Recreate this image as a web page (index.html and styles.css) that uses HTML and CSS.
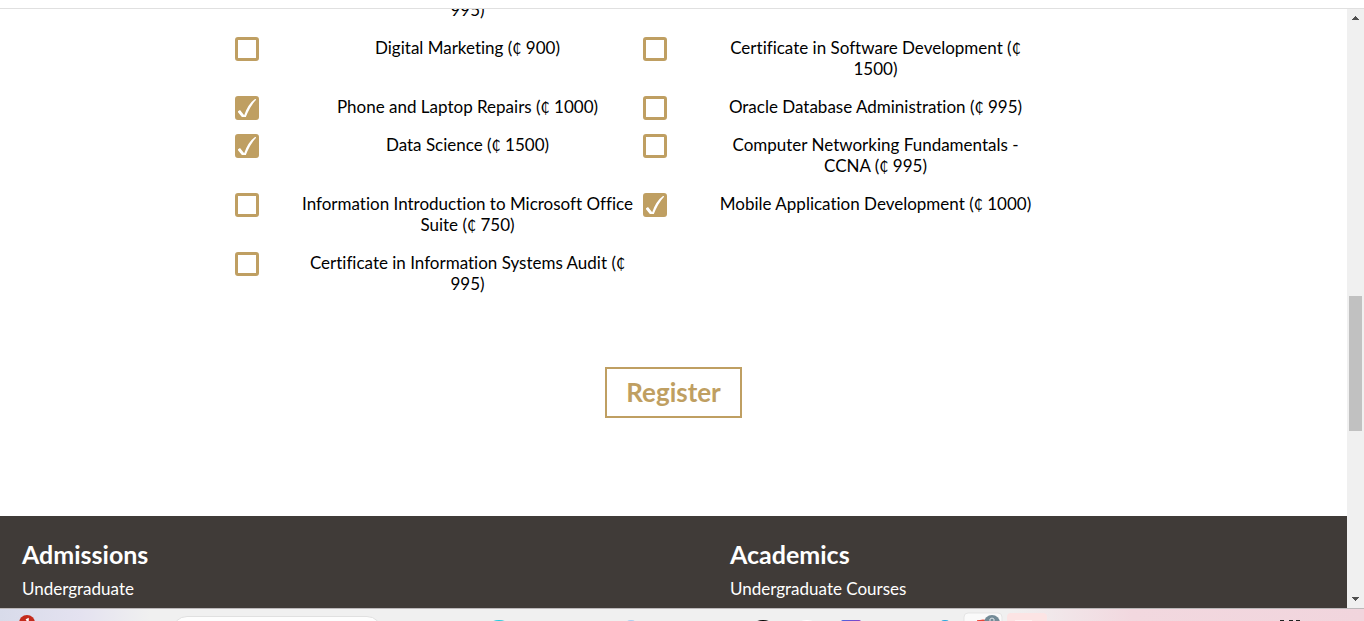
FILE: index.html
```html
<!DOCTYPE html>
<html lang="en">
<head>
<meta charset="utf-8">
<title>Course registration</title>
<link rel="stylesheet" href="styles.css">
</head>
<body>
<div class="top-edge"></div>
<div class="viewport">
  <div class="page">
    <form class="form">
      <div class="courses">
        <p class="carry">995)</p>
        <label class="course"><input class="box" type="checkbox"><span class="name">Digital Marketing (<span class="cedi">₵</span> 900)</span></label>
        <label class="course"><input class="box" type="checkbox"><span class="name">Certificate in Software Development (<span class="cedi">₵</span><br>1500)</span></label>
        <label class="course"><input class="box" type="checkbox" checked><span class="name">Phone and Laptop Repairs (<span class="cedi">₵</span> 1000)</span></label>
        <label class="course"><input class="box" type="checkbox"><span class="name">Oracle Database Administration (<span class="cedi">₵</span> 995)</span></label>
        <label class="course"><input class="box" type="checkbox" checked><span class="name">Data Science (<span class="cedi">₵</span> 1500)</span></label>
        <label class="course"><input class="box" type="checkbox"><span class="name">Computer Networking Fundamentals -<br>CCNA (<span class="cedi">₵</span> 995)</span></label>
        <label class="course"><input class="box" type="checkbox"><span class="name">Information Introduction to Microsoft Office<br>Suite (<span class="cedi">₵</span> 750)</span></label>
        <label class="course"><input class="box" type="checkbox" checked><span class="name">Mobile Application Development (<span class="cedi">₵</span> 1000)</span></label>
        <label class="course"><input class="box" type="checkbox"><span class="name">Certificate in Information Systems Audit (<span class="cedi">₵</span><br>995)</span></label>
      </div>
      <button class="register" type="submit">Register</button>
    </form>
    <footer class="footer">
      <nav><h2 class="heading">Admissions</h2><a class="link" href="#undergraduate">Undergraduate</a></nav>
      <nav><h2 class="heading">Academics</h2><a class="link" href="#courses">Undergraduate Courses</a></nav>
    </footer>
  </div>
  <div class="scrollbar">
    <svg class="arrow" viewBox="0 0 17 17"><path d="M5 11h7v-1h-1v-1h-1v-1h-1v-1h-1v1h-1v1h-1v1h-1z" fill="#505050"/></svg>
    <div class="track"><div class="thumb"></div></div>
    <svg class="arrow" viewBox="0 0 17 17"><path d="M5 6h7v1h-1v1h-1v1h-1v1h-1v-1h-1v-1h-1v-1h-1z" fill="#505050"/></svg>
  </div>
</div>
<div class="taskbar">
  <svg class="badge" width="172" height="12" viewBox="0 0 172 12"><circle cx="27" cy="14" r="8" fill="#c42b1c"/><path d="M26 11l2-1v4" fill="none" stroke="#fff" stroke-width="1.5"/></svg>
  <input class="search" type="text" aria-label="Search">
  <svg class="apps" width="982" height="12" viewBox="382 0 982 12">
    <defs><linearGradient id="v"><stop stop-color="#4967e0"/><stop offset="1" stop-color="#8a3fc5"/></linearGradient></defs>
    <rect x="964" y="4" width="38" height="14" rx="4" fill="#fafafa" stroke="#e5e5e5"/>
    <rect x="1007" y="4" width="40" height="14" rx="4" fill="#fce4e4"/>
    <rect x="1015" y="11" width="17" height="1" fill="#fff2f2"/>
    <ellipse cx="499" cy="14" rx="8" ry="3" fill="#20c9dc"/>
    <ellipse cx="631" cy="13" rx="4" ry="2" fill="#a9cdf1"/>
    <ellipse cx="763" cy="14" rx="8" ry="3" fill="#000"/>
    <ellipse cx="807" cy="13" rx="6" ry="2" fill="#fff"/>
    <rect x="841" y="11" width="20" height="4" rx="2" fill="url(#v)"/>
    <ellipse cx="945" cy="13" rx="4" ry="2" fill="#28a5dc"/>
    <path d="M977 12q6-2 12 0z" fill="#ea4335" stroke="#ea4335"/>
    <circle cx="992" cy="14" r="8" fill="#738b97"/>
    <path d="M990 12v-2q2-2 4 0v2" fill="none" stroke="#dce4e8"/>
    <path d="M1280 11.5h4m5 0h4m3 0h4" stroke="#222"/>
  </svg>
</div>
</body>
</html>
```
FILE: styles.css
```css
* { box-sizing: border-box; }
body {
  margin: 0;
  height: 100vh;
  display: flex;
  flex-direction: column;
  overflow: hidden;
  background: #fff;
  color: #000;
  font-family: Lato, "Liberation Sans", sans-serif;
  font-size: 17px;
  line-height: 21px;
  font-variant-ligatures: none;
}
.top-edge { flex: none; height: 9px; border-bottom: 1px solid #e0e0e0; }
.viewport { flex: 1; min-height: 0; display: flex; }
.page { flex: 1; display: flex; flex-direction: column; overflow: hidden; }
.form { display: flex; flex-direction: column; align-items: center; padding-bottom: 98px; }
.courses {
  width: 878px;
  max-width: 100%;
  margin-top: -10px;
  display: grid;
  grid-template-columns: 402px 402px;
  column-gap: 6px;
}
.carry { grid-column: 1 / -1; margin: 0; padding: 0 0 17px 64px; width: 402px; text-align: center; }
.course { display: flex; align-items: flex-start; gap: 40px; }
.name { flex: 1; padding-bottom: 17px; text-align: center; }
.cedi { font-family: "DejaVu Sans Condensed", "DejaVu Sans", sans-serif; font-size: 16px; line-height: 1; }
.box {
  appearance: none;
  flex: none;
  width: 24px;
  height: 24px;
  margin: 0;
  border: 3px solid #bf9f62;
  border-radius: 3px;
  background: #fff;
}
.box:checked {
  background: #bf9f62 url("data:image/svg+xml,%3Csvg xmlns='http://www.w3.org/2000/svg' viewBox='0 0 24 24'%3E%3Cpath d='M2.500 15.500 5 14l4.200 5.200Q13 8 20 3l1.500.300Q15 10 10 23H8.500Z' fill='white'/%3E%3C/svg%3E") center / 24px 24px no-repeat;
}
.register {
  margin-top: 56px;
  padding: 9px 19px;
  border: 2px solid #bf9f62;
  background: #fff;
  color: #bf9f62;
  font: bold 26px/29px Lato, "Liberation Sans", sans-serif;
}
.footer {
  flex: 1;
  display: grid;
  grid-template-columns: 708fr 617fr;
  padding: 24px 0 0 22px;
  background: #403b38;
  color: #fff;
}
.heading { margin: 0 0 10px; font-size: 25px; line-height: 28px; }
.link { color: #fff; text-decoration: none; }
.scrollbar { flex: none; width: 17px; display: flex; flex-direction: column; background: #f0f0f0; }
.arrow { flex: none; width: 17px; height: 17px; }
.track { flex: 1; padding: 0 2px; display: grid; grid-template-rows: 270fr 135fr 160fr; }
.thumb { grid-row: 2; background: #c1c1c1; }
.taskbar {
  flex: none;
  height: 13px;
  display: flex;
  justify-content: space-between;
  overflow: hidden;
  border-top: 1px solid #bcb8ba;
  background: linear-gradient(90deg, #d8dbea 0%, #e4e2f0 6%, #f0f0f0 11%, #f0f0f0 74%, #f2d8df 83%, #f1d5dd 100%);
}
.badge, .apps { flex: none; }
.search { flex: 1; min-width: 0; height: 30px; margin-top: 7px; border: 1px solid #e0e0e0; border-radius: 15px; background: #fdfdfd; }
```
